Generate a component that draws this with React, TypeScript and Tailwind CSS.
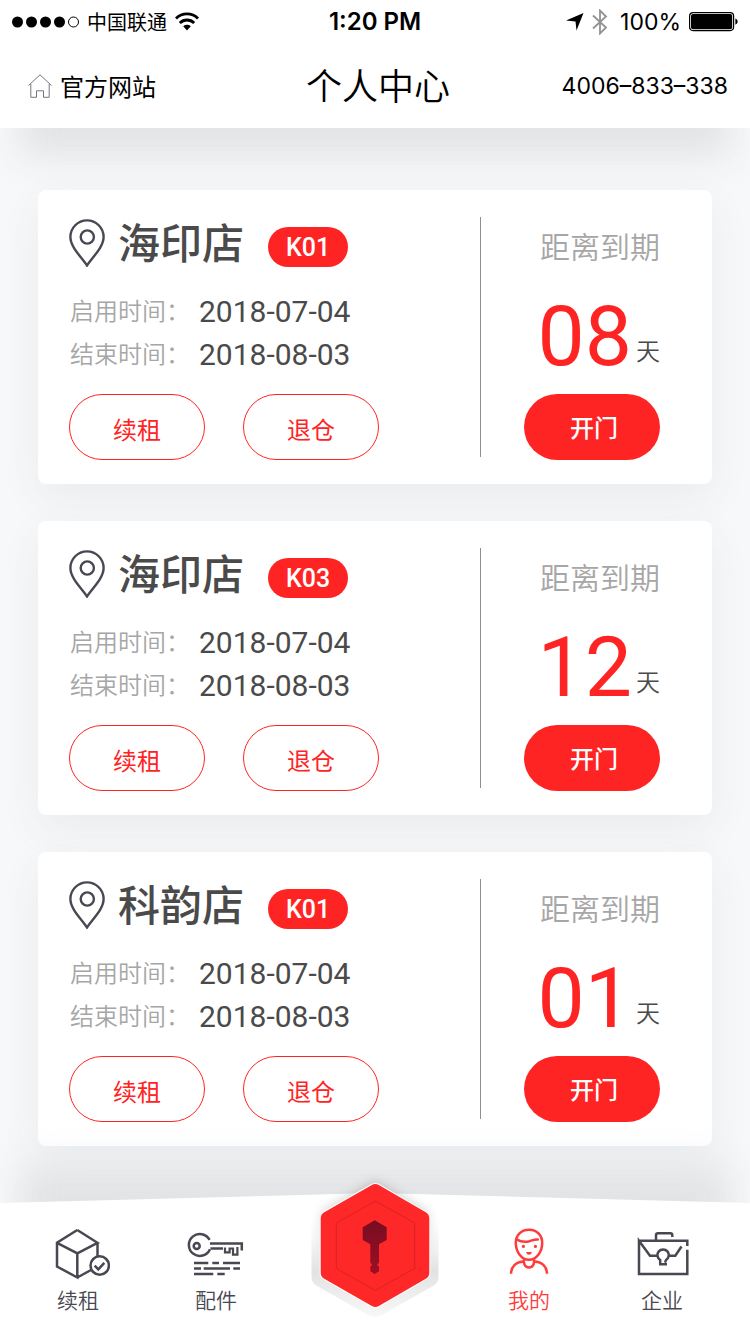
import type { ReactNode } from 'react';

interface Rental {
  id: number;
  store: string;
  code: string;
  start: string;
  end: string;
  daysLeft: string;
}

const rentals: Rental[] = [
  { id: 1, store: '海印店', code: 'K01', start: '2018-07-04', end: '2018-08-03', daysLeft: '08' },
  { id: 2, store: '海印店', code: 'K03', start: '2018-07-04', end: '2018-08-03', daysLeft: '12' },
  { id: 3, store: '科韵店', code: 'K01', start: '2018-07-04', end: '2018-08-03', daysLeft: '01' },
];

function WifiIcon() {
  return (
    <svg className="h-5 w-6" viewBox="0 0 24 20" fill="none" stroke="#000" strokeWidth="2.8">
      <path d="M1 6.4a15.6 15.6 0 0 1 22 0" />
      <path d="M4.8 11a10.2 10.2 0 0 1 14.4 0" />
      <path d="M12 18.5l-3.8-4.2a5.6 5.6 0 0 1 7.6 0z" fill="#000" stroke="none" />
    </svg>
  );
}

function StatusBar() {
  return (
    <div className="grid h-10 grid-cols-[1fr_auto_1fr] items-center px-3 pt-1">
      <div className="flex items-center gap-2">
        <svg className="h-3 w-[67px]" viewBox="0 0 67 12">
          <circle cx="5.5" cy="6" r="5.5" />
          <circle cx="19.5" cy="6" r="5.5" />
          <circle cx="33.5" cy="6" r="5.5" />
          <circle cx="47.5" cy="6" r="5.5" />
          <circle cx="61.5" cy="6" r="5" fill="none" stroke="#000" />
        </svg>
        <span className="text-[20px] leading-6">中国联通</span>
        <WifiIcon />
      </div>
      <span className="font-['Inter'] text-[24px] leading-6 font-semibold">1:20 PM</span>
      <div className="flex items-center justify-end gap-1">
        <svg className="h-[18px] w-[18px]" viewBox="0 0 18 18">
          <path d="M17.5 0L10.5 17.5 9.5 8.5 0 7.5z" />
        </svg>
        <svg className="mx-1 h-[26px] w-4" viewBox="0 0 16 26" fill="none" stroke="#929292" strokeWidth="1.8">
          <path d="M1 6.5l13 12L8 24.5V1.5l6 6-13 12" />
        </svg>
        <span className="ml-1 font-['Inter'] text-[23px] leading-6">100%</span>
        <svg className="ml-1 h-5 w-[49px]" viewBox="0 0 49 20">
          <rect x=".6" y=".6" width="44" height="18" rx="3.5" fill="none" stroke="#000" strokeWidth="1.2" />
          <rect x="2" y="2" width="41.2" height="15.2" rx="2" />
          <path d="M46.4 6.5c1.4.6 2.2 1.6 2.2 3.1s-.8 2.5-2.2 3.1z" />
        </svg>
      </div>
    </div>
  );
}

function Header() {
  return (
    <header className="relative bg-white text-black">
      <div className="absolute inset-x-5 top-12 -bottom-7 -z-10 bg-[#e2e3e5] blur-[18px]" />
      <div className="bg-white">
        <StatusBar />
        <div className="grid h-[88px] grid-cols-[1fr_auto_1fr] items-center pr-[22px] pl-7">
          <a href="#site" className="flex items-center gap-2 pt-1 text-[24px] leading-8">
            <svg className="h-6 w-6" viewBox="0 0 24 24" fill="none" stroke="#77747f" strokeWidth="1">
              <path d="M.5 11.5L12 .8l11.5 10.7" />
              <path d="M2.8 10v13.3h5.7v-6.5h7v6.5h5.7V10" />
            </svg>
            官方网站
          </a>
          <h1 className="text-[36px] leading-[48px] font-[350]">个人中心</h1>
          <a href="tel:4006833338" className="justify-self-end pt-1 font-['Inter'] text-[23px] leading-8">
            4006–833–338
          </a>
        </div>
      </div>
    </header>
  );
}

function PinIcon() {
  return (
    <svg className="h-12 w-9 shrink-0" viewBox="0 0 36 48" fill="none" stroke="#4a4753" strokeWidth="2.4">
      <path d="M18 46.5C13 38.5 1.4 28.5 1.4 18a16.6 16.6 0 0 1 33.2 0C34.6 28.5 23 38.5 18 46.5z" />
      <circle cx="18.3" cy="18" r="6.6" />
    </svg>
  );
}

function DateRow({ label, value }: { label: string; value: string }) {
  return (
    <div className="flex h-[43px] items-center">
      <dt className="w-[129px] pb-1 text-[24px] leading-8 font-[350] text-[#a6a6a6]">{label}</dt>
      <dd className="font-['Roboto'] text-[30px] leading-8 text-[#4a4a4a]">{value}</dd>
    </div>
  );
}

function OutlineButton({ children }: { children: ReactNode }) {
  return (
    <button
      type="button"
      className="h-[66px] w-[136px] rounded-full border border-[#ff2424] pt-1 text-[24px] leading-8 text-[#ff2424]"
    >
      {children}
    </button>
  );
}

function RentalCard({ rental }: { rental: Rental }) {
  return (
    <article className="flex h-[294px] rounded-lg bg-white shadow-[0_14px_40px_rgba(60,65,75,0.07)]">
      <div className="flex-1 pt-[29px] pl-[31px]">
        <div className="flex h-12 items-end">
          <PinIcon />
          <h2 className="ml-[13px] pb-0.5 text-[42px] leading-[48px] font-medium text-[#4a4a4a]">{rental.store}</h2>
          <span className="ml-6 h-10 w-20 rounded-full bg-[#ff2424] text-center font-['Roboto'] text-[25px] leading-[42px] font-medium text-white">
            {rental.code}
          </span>
        </div>
        <dl className="mt-[23px] pl-px">
          <DateRow label="启用时间：" value={rental.start} />
          <DateRow label="结束时间：" value={rental.end} />
        </dl>
        <div className="mt-[18px] flex gap-[38px]">
          <OutlineButton>续租</OutlineButton>
          <OutlineButton>退仓</OutlineButton>
        </div>
      </div>
      <div className="my-[27px] w-px bg-[#8e8e93]" />
      <div className="flex flex-col items-end pt-10 pr-[52px] pb-6 pl-[43px]">
        <p className="text-[30px] leading-[30px] font-[350] text-[#a6a6a6]">距离到期</p>
        <p className="mt-[34px] flex items-end gap-1">
          <span className="font-['Roboto'] text-[84px] leading-[86px] text-[#ff2424]">{rental.daysLeft}</span>
          <span className="pb-2.5 text-[24px] leading-10 font-[350] text-[#4a4a4a]">天</span>
        </p>
        <button
          type="button"
          className="mt-auto h-[66px] w-[136px] rounded-full bg-[#ff2424] pl-1 text-[24px] leading-8 font-medium text-white"
        >
          开门
        </button>
      </div>
    </article>
  );
}

function BoxIcon() {
  return (
    <>
      <path d="M31.3 4L11 16.8V40.5L31.3 51.5V27.3L11 16.8M31.3 27.3L51.5 16.8 31.3 4M51.5 16.8V30M31.3 51.5L46 43.5" />
      <circle cx="53.7" cy="39.5" r="9.2" />
      <path d="M48.7 39.7l3.6 3.7 6-6.6" />
    </>
  );
}

function KeyIcon() {
  return (
    <>
      <path d="M25.6 13.8A11 11 0 1 0 26 23.3" />
      <circle cx="12.7" cy="20" r="3" />
      <path d="M26 17.5H57.8V24.5M26.5 22.4H39" />
      <path d="M41 21.5V26.3H45.6V22.5H49V28.6H53.4V21" strokeWidth="2.2" />
      <path d="M10 37H24.3M28.3 37H35M39 37H56M10 42.4H17M19.7 42.4H46M49.3 42.4H56M10 48H29.3M33.3 48H40.7" />
    </>
  );
}

function PersonIcon() {
  return (
    <>
      <path d="M32 3.8C23.8 3.8 18.6 9.6 18.8 17.5 19 25.6 24.4 33.8 32 33.8S45 25.6 45.2 17.5C45.4 9.6 40.2 3.8 32 3.8z" />
      <path d="M20 13.6c3.4 2 7.4 2.9 12.4 1.6 3.2-1 5.4-2 8.4-1.8" strokeLinecap="round" />
      <circle cx="26.4" cy="20.4" r="1.6" fill="currentColor" stroke="none" />
      <circle cx="38.4" cy="20.4" r="1.6" fill="currentColor" stroke="none" />
      <path d="M29.2 26h5.6c-.2 1.8-1.2 2.8-2.8 2.8s-2.6-1-2.8-2.8z" fill="currentColor" stroke="none" />
      <path d="M27 33.5c-.8 4.4 1.2 7.9 5 7.9s5.8-3.5 5-7.9" />
      <path d="M14 47.8C14.3 40.5 19 35.8 27 35.5M50 47.8C49.7 40.5 45 35.8 37 35.5" />
    </>
  );
}

function BriefcaseIcon() {
  return (
    <>
      <path d="M26 14V9.2Q26 7.3 28 7.3H40.3Q42.3 7.3 42.3 9.2V11" />
      <path d="M7.7 14.7H57.3V20M57.3 23.7V48H9V14.7L20 29.7H27.3M38.7 29.7H45.3L51.5 20.5" />
      <path d="M30.2 38.5V34A5.7 5.7 0 1 1 36 34L35 36.6M29 38.2H37" />
    </>
  );
}

interface NavItemProps {
  label: string;
  icon: ReactNode;
  active?: boolean;
}

function NavItem({ label, icon, active = false }: NavItemProps) {
  return (
    <a
      href="#nav"
      aria-current={active ? 'page' : undefined}
      className={`flex w-16 flex-col items-center gap-[5px] ${active ? 'text-[#ff3b3b]' : 'text-[#4a4753]'}`}
    >
      <svg className="h-14 w-16" viewBox="0 0 64 56" fill="none" stroke="currentColor" strokeWidth="2.5">
        {icon}
      </svg>
      <span className="text-[21px] leading-6 font-[350]">{label}</span>
    </a>
  );
}

function OpenDoorButton() {
  return (
    <button type="button" aria-label="开门" className="-mt-[13px]">
      <svg className="h-[138px] w-32 overflow-visible" viewBox="0 0 128 138">
        <defs>
          <linearGradient id="plate" x1="0" y1="0" x2="0" y2="1">
            <stop offset="0.15" stopColor="#fff" stopOpacity="0" />
            <stop offset="0.65" stopColor="#e2e2e3" />
            <stop offset="1" stopColor="#f8f8f8" />
          </linearGradient>
          <linearGradient id="hole" x1="0" y1="0" x2="0" y2="1">
            <stop offset="0" stopColor="#760d22" />
            <stop offset="1" stopColor="#9e0f22" />
          </linearGradient>
          <filter id="soft" x="-30%" y="-30%" width="160%" height="160%">
            <feGaussianBlur stdDeviation="6" />
          </filter>
        </defs>
        <path
          d="M64 8L111 36V82L64 109 17 82V36z"
          fill="#555"
          stroke="#555"
          strokeWidth="10"
          opacity="0.35"
          filter="url(#soft)"
        />
        <path d="M.5 40L64 4 127.5 40V97Q127.5 103 122 106L70 135.5Q64 138.5 58 135.5L6 106Q.5 103 .5 97z" fill="url(#plate)" />
        <path d="M64.3 11L111.3 38.3V92.7L64.3 120 16.7 92.7V38.3z" fill="#fff" stroke="#fff" strokeWidth="16" strokeLinejoin="round" />
        <path d="M64.3 11L111.3 38.3V92.7L64.3 120 16.7 92.7V38.3z" fill="#ff2828" stroke="#ff2828" strokeWidth="14" strokeLinejoin="round" />
        <path d="M64.3 21L103.7 43V88.3L64.3 110.5 25.3 88.3V43z" fill="none" stroke="#d92228" />
        <path
          d="M63.7 40.3L75.7 47.3V60L68 64.3V82.7L66 85 68 86.5V91.3L63.7 94 59.3 91.3V86.5L61.3 85 59.3 82.7V64.3L51.7 60V47.3z"
          fill="url(#hole)"
        />
      </svg>
    </button>
  );
}

function BottomNav() {
  return (
    <nav className="relative">
      <div className="absolute inset-x-5 -top-7 bottom-10 bg-[#e2e3e5] blur-[18px]" />
      <div className="absolute inset-0 bg-white [clip-path:polygon(0_10px,50%_0,100%_10px,100%_100%,0_100%)]" />
      <div className="relative grid grid-cols-[1fr_auto_1fr] items-start">
        <div className="flex justify-between pt-[33px] pr-[63px] pb-[23px] pl-[46px]">
          <NavItem label="续租" icon={<BoxIcon />} />
          <NavItem label="配件" icon={<KeyIcon />} />
        </div>
        <OpenDoorButton />
        <div className="flex justify-between pt-[33px] pr-14 pb-[23px] pl-[58px]">
          <NavItem label="我的" icon={<PersonIcon />} active />
          <NavItem label="企业" icon={<BriefcaseIcon />} />
        </div>
      </div>
    </nav>
  );
}

export default function App() {
  return (
    <div className="relative isolate flex min-h-screen flex-col overflow-hidden bg-[#f7f8fa] font-['Noto_Sans_CJK_SC',sans-serif]">
      <Header />
      <main className="flex flex-1 flex-col gap-[37px] px-[38px] pt-[62px] pb-[47px]">
        {rentals.map((rental) => (
          <RentalCard key={rental.id} rental={rental} />
        ))}
      </main>
      <BottomNav />
    </div>
  );
}
